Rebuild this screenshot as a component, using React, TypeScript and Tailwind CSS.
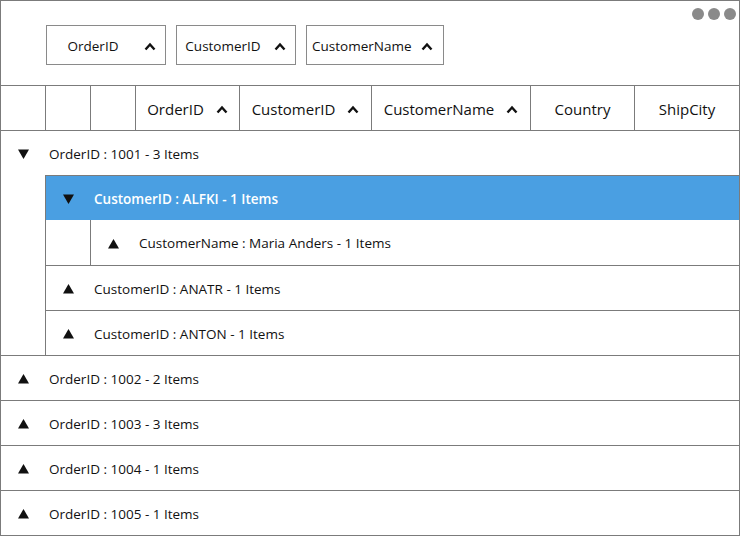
import React from "react";

const font = { fontFamily: '"Open Sans", "Noto Sans", sans-serif' };

function Caret() {
  return (
    <svg width="12" height="9" viewBox="0 0 12 9" className="shrink-0">
      <polyline points="1.5,7.5 6,2.5 10.5,7.5" fill="none" stroke="#111" strokeWidth="2.4" />
    </svg>
  );
}

function Tri({ down }: { down?: boolean }) {
  return (
    <svg width="11" height="10" viewBox="0 0 11 10" className="shrink-0">
      {down ? <polygon points="0,0.5 11,0.5 5.5,10" fill="#111" /> : <polygon points="0,9.5 11,9.5 5.5,0" fill="#111" />}
    </svg>
  );
}

const chips = ["OrderID", "CustomerID", "CustomerName"];

const headers: { label: string; w: string; sort?: boolean }[] = [
  { label: "OrderID", w: "w-[104px]", sort: true },
  { label: "CustomerID", w: "w-[132px]", sort: true },
  { label: "CustomerName", w: "w-[159px]", sort: true },
  { label: "Country", w: "w-[104px]" },
  { label: "ShipCity", w: "flex-1" },
];

function Caption({ text, open, selected, h = "h-[44px]" }: { text: string; open?: boolean; selected?: boolean; h?: string }) {
  return (
    <div className={`${h} flex items-center pl-[17px] pt-[2px] ${selected ? "bg-[#4a9fe2] text-white font-semibold" : "text-[#111]"}`}>
      <Tri down={open} />
      <span className="ml-[20px] text-[13.5px]">{text}</span>
    </div>
  );
}

export default function App() {
  return (
    <div className="w-[740px] h-[536px] border border-[#7b7b7b] bg-white relative overflow-hidden" style={font}>
      {/* drop area */}
      <div className="h-[85px] border-b border-[#7b7b7b] pl-[45px] pt-[24px] flex items-start gap-[10px]">
        {chips.map((c) => (
          <div key={c} className="h-[40px] border border-[#8a8a8a] flex items-center pt-[2px]">
            <span className="min-w-[92px] px-[5px] text-center text-[13.5px] text-[#111]">{c}</span>
            <span className="w-[26px] flex justify-center pr-[5px]">
              <Caret />
            </span>
          </div>
        ))}
      </div>
      <div className="absolute top-[7px] right-[3px] flex gap-[4px]">
        <span className="w-[12px] h-[12px] rounded-full bg-[#8a8a8a]" />
        <span className="w-[12px] h-[12px] rounded-full bg-[#8a8a8a]" />
        <span className="w-[12px] h-[12px] rounded-full bg-[#8a8a8a]" />
      </div>

      {/* header */}
      <div className="h-[45px] border-b border-[#7b7b7b] flex">
        <div className="w-[45px] border-r border-[#7b7b7b]" />
        <div className="w-[45px] border-r border-[#7b7b7b]" />
        <div className="w-[45px] border-r border-[#7b7b7b]" />
        {headers.map((h, i) => (
          <div
            key={h.label}
            className={`${h.w} ${i < headers.length - 1 ? "border-r border-[#7b7b7b]" : ""} flex items-center justify-center gap-[12px] pt-[2px] text-[15px] text-[#111]`}
          >
            <span>{h.label}</span>
            {h.sort && <Caret />}
          </div>
        ))}
      </div>

      {/* group 1001 */}
      <div className="border-b border-[#7b7b7b]">
        <Caption text="OrderID : 1001 - 3 Items" open />
        <div className="ml-[44px] border-l border-t border-[#7b7b7b]">
          <div className="border-b border-[#7b7b7b]">
            <Caption text="CustomerID : ALFKI - 1 Items" open selected />
            <div className="ml-[44px] border-l border-[#7b7b7b]">
              <Caption text="CustomerName : Maria Anders - 1 Items" h="h-[45px]" />
            </div>
          </div>
          <div className="border-b border-[#7b7b7b]">
            <Caption text="CustomerID : ANATR - 1 Items" />
          </div>
          <Caption text="CustomerID : ANTON - 1 Items" />
        </div>
      </div>

      {["1002 - 2", "1003 - 3", "1004 - 1"].map((g) => (
        <div key={g} className="border-b border-[#7b7b7b]">
          <Caption text={`OrderID : ${g} Items`} />
        </div>
      ))}
      <Caption text="OrderID : 1005 - 1 Items" />
    </div>
  );
}
